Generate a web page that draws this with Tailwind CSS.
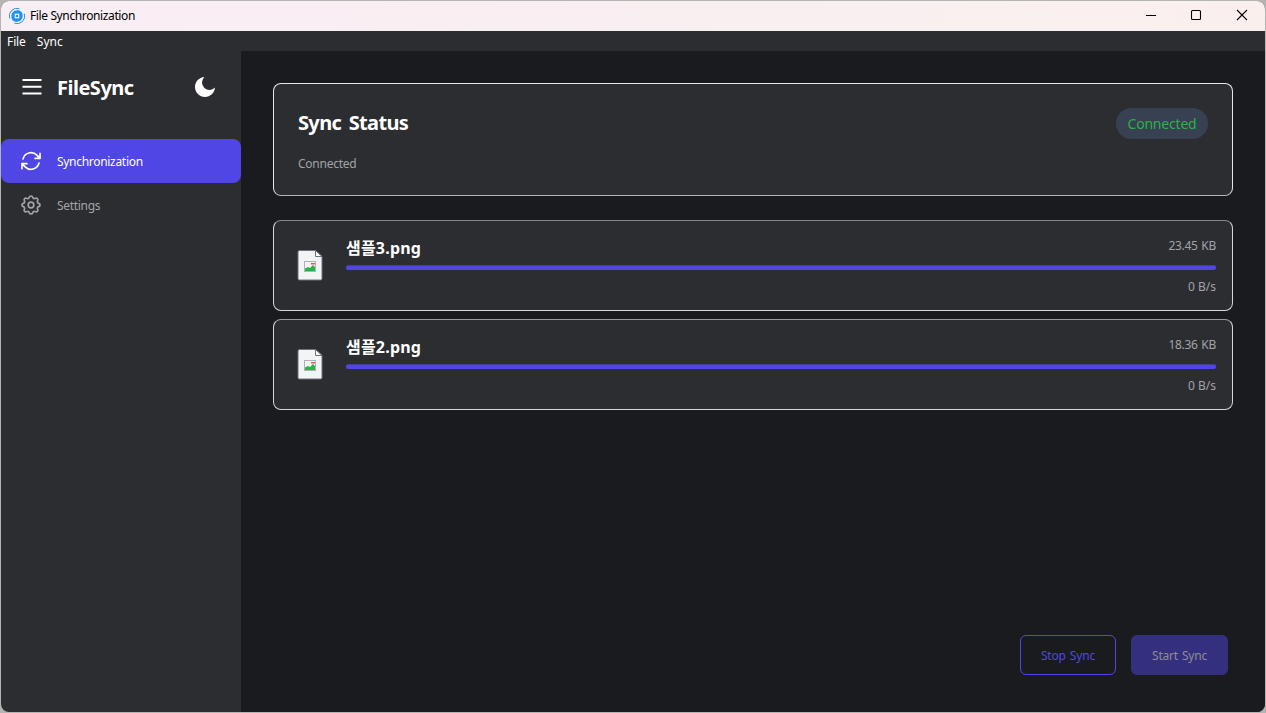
<!DOCTYPE html>
<html lang="ko">
<head>
<meta charset="utf-8">
<title>File Synchronization</title>
<script src="https://cdn.jsdelivr.net/npm/@tailwindcss/browser@4"></script>
</head>
<body class="h-[713px] w-[1266px] overflow-hidden bg-[#b4b4b2] p-px font-['Noto_Sans','Noto_Sans_CJK_KR',sans-serif]">
<div class="flex h-[711px] w-[1264px] flex-col overflow-hidden rounded-lg bg-[#2c2d31]">
  <header class="flex h-[30px] shrink-0 items-center bg-linear-to-r from-[#f8eef5] to-[#f9f0ee] pl-2 text-black">
    <svg class="mb-px size-4" viewBox="0 0 16 16" fill="none">
      <circle cx="8" cy="8" r="6" fill="#1e90f5"/>
      <path d="M.8 10.500A7.500 7.500 0 0 1 10.500 .8M15.200 5.500A7.500 7.500 0 0 1 5.500 15.200" stroke="#1e90f5" stroke-width="1"/>
      <path d="M2 9.600A6.200 6.200 0 0 1 8 1.900M14 6.400A6.200 6.200 0 0 1 8 14.100" stroke="#fff" stroke-width=".7"/>
      <rect x="6.250" y="6.250" width="3.500" height="3.500" stroke="#fff" stroke-width="1.100"/>
    </svg>
    <span class="ml-[5px] text-[12px] leading-4 tracking-[-0.38px]">File Synchronization</span>
    <div class="mb-[2px] ml-auto flex">
      <div class="flex w-[45px] justify-center"><svg class="size-3" viewBox="0 0 12 12"><path d="M1 6.500h10" stroke="#000"/></svg></div>
      <div class="flex w-[46px] justify-center"><svg class="size-3" viewBox="0 0 12 12"><rect x="1.500" y="1.500" width="9" height="9" rx="1" fill="none" stroke="#000" stroke-width="1.100"/></svg></div>
      <div class="flex w-[46px] justify-center"><svg class="size-3" viewBox="0 0 12 12"><path d="M1 1l10 10M11 1L1 11" stroke="#000" stroke-width="1.100"/></svg></div>
    </div>
  </header>
  <nav class="flex h-5 shrink-0 items-center gap-[11px] pt-[2px] pl-1.5 text-[12px] leading-4 text-white">
    <span class="tracking-[-0.1px]">File</span><span>Sync</span>
  </nav>
  <div class="flex min-h-0 flex-1">
    <aside class="flex w-60 shrink-0 flex-col">
      <div class="flex h-[72px] items-center pl-[21px] pr-[26px] text-white">
        <svg class="h-5 w-5" viewBox="0 0 20 20"><path d="M.5 3h19M.5 9.800h19M.5 16.500h19" stroke="currentColor" stroke-width="1.900"/></svg>
        <h1 class="mt-[2px] ml-[15px] text-[20px] leading-7 font-bold tracking-[-0.5px]">FileSync</h1>
        <svg class="ml-auto size-5" viewBox="2 2 20 20" fill="currentColor"><path d="M11.380 2.019a7.500 7.500 0 1 0 10.600 10.600C21.662 17.854 17.316 22 12.001 22 6.477 22 2 17.523 2 12c0-5.315 4.146-9.661 9.380-9.981z"/></svg>
      </div>
      <ul class="mt-4 text-[12px] leading-5">
        <li class="flex h-11 items-center gap-[14px] rounded-lg bg-[#4f46e5] pl-[18px] text-white">
          <svg class="size-6" viewBox="0 0 24 24" fill="none" stroke="currentColor" stroke-width="1.7" stroke-linecap="round" stroke-linejoin="round"><path d="M16.023 9.348h4.992v-.001M2.985 19.644v-4.992m0 0h4.992m-4.993 0 3.181 3.183a8.25 8.25 0 0 0 13.803-3.7M4.031 9.865a8.25 8.25 0 0 1 13.803-3.7l3.181 3.182m0-4.991v4.99"/></svg>
          <span class="mt-[2px] tracking-[-0.3px]">Synchronization</span>
        </li>
        <li class="flex h-11 items-center gap-[14px] pl-[18px] text-[#a1a3a9]">
          <svg class="size-6" viewBox="0 0 24 24" fill="none" stroke="currentColor" stroke-width="1.7" stroke-linecap="round" stroke-linejoin="round"><path d="M10.325 4.317c.426-1.756 2.924-1.756 3.35 0a1.724 1.724 0 002.573 1.066c1.543-.94 3.31.826 2.37 2.37a1.724 1.724 0 001.065 2.572c1.756.426 1.756 2.924 0 3.35a1.724 1.724 0 00-1.066 2.573c.94 1.543-.826 3.31-2.37 2.37a1.724 1.724 0 00-2.572 1.065c-.426 1.756-2.924 1.756-3.35 0a1.724 1.724 0 00-2.573-1.066c-1.543.94-3.31-.826-2.37-2.37a1.724 1.724 0 00-1.065-2.572c-1.756-.426-1.756-2.924 0-3.35a1.724 1.724 0 001.066-2.573c-.94-1.543.826-3.31 2.37-2.37.996.608 2.296.07 2.572-1.065z"/><circle cx="12" cy="12" r="2.800"/></svg>
          <span class="mt-[2px] tracking-[-0.3px]">Settings</span>
        </li>
      </ul>
    </aside>
    <main class="flex flex-1 flex-col bg-[#1a1b1e] px-8 pt-8">
      <section class="flex h-[113px] items-start justify-between rounded-lg border border-[#e5e7eb] border-b-[#b4b5b9] bg-[#2c2d31] p-6">
        <div>
          <h2 class="mt-px text-[20px] leading-7 font-bold tracking-[-0.65px] text-white [word-spacing:3px]">Sync Status</h2>
          <p class="mt-[17px] text-[12px] leading-5 tracking-[-0.25px] text-[#a1a3a9]">Connected</p>
        </div>
        <span class="flex h-[31px] w-[92px] items-center justify-center rounded-full bg-[#374151] text-[14px] tracking-[-0.2px] text-[#28b446]">Connected</span>
      </section>
      <div class="mt-6 flex flex-col gap-2">
        <article class="flex h-[91px] rounded-lg border border-[#d5d6d9] border-t-[#85868a] bg-[#2c2d31] p-4">
          <svg class="mt-3 ml-[7px] h-8 w-[27px]" viewBox="0 0 27 32"><path d="M2.500 1.500h16l6.500 6V29.500a1.500 1.500 0 0 1-1.500 1.500h-21A1.500 1.500 0 0 1 1 29.500V3a1.500 1.500 0 0 1 1.500-1.500z" fill="#f3f4f6" stroke="#6b7280"/><path d="M18.500 1.500v6H25z" fill="#fff" stroke="#6b7280"/><rect x="7.500" y="12.500" width="11" height="10" fill="#f3f4f6" stroke="#b0b2b6"/><path d="M14 14h4v1.500h-4z" fill="#e25a50"/><path d="M8 22v-2.500l3-1.500 2 1 3-3 2 2v4z" fill="#28b446"/></svg>
          <div class="ml-[22px] flex flex-1 flex-col">
            <div class="flex h-7 shrink-0 justify-between"><h3 class="text-[16px] leading-[23px] font-bold tracking-[0.2px] text-white">샘플3.png</h3><span class="mt-px text-[12px] leading-4 tracking-[-0.3px] text-[#a1a3a9] [word-spacing:1px]">23.45 KB</span></div>
            <div class="h-[5px] shrink-0 rounded-xs border-t border-t-[#433e9c] bg-[#4f46e5]"></div>
            <span class="mt-[9px] shrink-0 self-end text-[12px] leading-4 text-[#a1a3a9]">0 B/s</span>
          </div>
        </article>
        <article class="flex h-[91px] rounded-lg border border-[#d5d6d9] border-t-[#9b9ca0] bg-[#2c2d31] p-4">
          <svg class="mt-3 ml-[7px] h-8 w-[27px]" viewBox="0 0 27 32"><path d="M2.500 1.500h16l6.500 6V29.500a1.500 1.500 0 0 1-1.500 1.500h-21A1.500 1.500 0 0 1 1 29.500V3a1.500 1.500 0 0 1 1.500-1.500z" fill="#f3f4f6" stroke="#6b7280"/><path d="M18.500 1.500v6H25z" fill="#fff" stroke="#6b7280"/><rect x="7.500" y="12.500" width="11" height="10" fill="#f3f4f6" stroke="#b0b2b6"/><path d="M14 14h4v1.500h-4z" fill="#e25a50"/><path d="M8 22v-2.500l3-1.500 2 1 3-3 2 2v4z" fill="#28b446"/></svg>
          <div class="ml-[22px] flex flex-1 flex-col">
            <div class="flex h-7 shrink-0 justify-between"><h3 class="text-[16px] leading-[23px] font-bold tracking-[0.2px] text-white">샘플2.png</h3><span class="mt-px text-[12px] leading-4 tracking-[-0.3px] text-[#a1a3a9] [word-spacing:1px]">18.36 KB</span></div>
            <div class="h-[5px] shrink-0 rounded-xs border-t border-t-[#433e9c] bg-[#4f46e5]"></div>
            <span class="mt-[9px] shrink-0 self-end text-[12px] leading-4 text-[#a1a3a9]">0 B/s</span>
          </div>
        </article>
      </div>
      <footer class="mt-auto mb-[37px] flex justify-end gap-[15px] pr-[5px] text-[12px]">
        <button class="h-10 w-[96px] rounded-md border border-[#4f46e5] pt-[2px] tracking-[-0.15px] text-[#4f46e5] [word-spacing:1px]">Stop Sync</button>
        <button class="h-10 w-[97px] rounded-md bg-[#352f80] pt-[2px] tracking-[-0.2px] text-[#8d8d93] [word-spacing:1px]">Start Sync</button>
      </footer>
    </main>
  </div>
</div>
</body>
</html>
